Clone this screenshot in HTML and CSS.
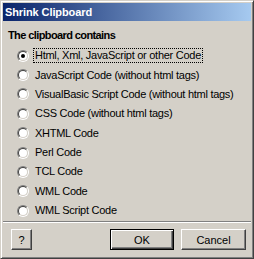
FILE: index.html
```html
<!DOCTYPE html>
<html lang="en">
<head>
    <meta charset="UTF-8">
    <title>Shrink Clipboard</title>
    <link rel="stylesheet" href="styles.css">
</head>
<body>
    <div class="dialog">
        <div class="title-bar">Shrink Clipboard</div>
        <div class="content">
            <h1>The clipboard contains</h1>
            <ul class="options">
                <li><span class="radio checked"></span><span class="label focused">Html, Xml, JavaScript or other Code</span></li>
                <li><span class="radio"></span><span class="label">JavaScript Code (without html tags)</span></li>
                <li><span class="radio"></span><span class="label">VisualBasic Script Code (without html tags)</span></li>
                <li><span class="radio"></span><span class="label">CSS Code (without html tags)</span></li>
                <li><span class="radio"></span><span class="label">XHTML Code</span></li>
                <li><span class="radio"></span><span class="label">Perl Code</span></li>
                <li><span class="radio"></span><span class="label">TCL Code</span></li>
                <li><span class="radio"></span><span class="label">WML Code</span></li>
                <li><span class="radio"></span><span class="label">WML Script Code</span></li>
            </ul>
        </div>
        <div class="separator"></div>
        <div class="buttons">
            <button class="btn btn-help">?</button>
            <div class="spacer"></div>
            <button class="btn btn-default">OK</button>
            <button class="btn">Cancel</button>
        </div>
    </div>
</body>
</html>
```

FILE: styles.css
```css
body {
    margin: 0;
    font-family: 'Liberation Sans', Arial, sans-serif;
    font-size: 11px;
    color: #000;
    background-color: #d4d0c8;
}
.dialog {
    width: 254px;
    height: 259px;
    box-sizing: border-box;
    padding: 2px;
    background-color: #d4d0c8;
    border: 1px solid;
    border-color: #d4d0c8 #404040 #404040 #d4d0c8;
    box-shadow: inset 1px 1px #ffffff, inset -1px -1px #808080;
    display: flex;
    flex-direction: column;
}
.title-bar {
    height: 18px;
    line-height: 18px;
    padding-left: 2px;
    color: #ffffff;
    font-weight: bold;
    letter-spacing: -0.1px;
    background: linear-gradient(to right, #0a246a, #a6caf0);
}
.content {
    padding: 0 5px;
}
h1 {
    margin: 8px 0 0 0;
    font-size: 11px;
    line-height: 13px;
    font-weight: bold;
    letter-spacing: -0.6px;
}
.options {
    list-style: none;
    margin: 4px 0 0 0;
    padding: 0 0 0 9px;
}
.options li {
    display: flex;
    align-items: center;
    height: 19.375px;
    white-space: nowrap;
}
.radio {
    position: relative;
    width: 12px;
    height: 12px;
    box-sizing: border-box;
    border-radius: 50%;
    border: 1px solid;
    border-color: #808080 #ffffff #ffffff #808080;
    flex-shrink: 0;
}
.radio::before {
    content: "";
    position: absolute;
    inset: 0;
    border-radius: 50%;
    border: 1px solid;
    border-color: #404040 #d4d0c8 #d4d0c8 #404040;
    background-color: #ffffff;
}
.radio.checked::after {
    content: "";
    position: absolute;
    left: 3px;
    top: 3px;
    width: 4px;
    height: 4px;
    border-radius: 50%;
    background-color: #000;
}
.label {
    margin-left: 4px;
    padding: 0 1px;
    line-height: 13px;
    letter-spacing: -0.27px;
    border: 1px dotted transparent;
}
.label.focused {
    border-color: #000;
}
.separator {
    margin-top: auto;
    height: 1px;
    border-top: 1px solid #808080;
    background-color: #ffffff;
    margin-bottom: 6px;
}
.buttons {
    display: flex;
    padding: 0 5px 6px 8px;
    gap: 7px;
}
.spacer {
    flex: 1;
}
.btn {
    height: 21px;
    width: 65px;
    padding: 0;
    font-family: 'Liberation Sans', Arial, sans-serif;
    font-size: 11px;
    color: #000;
    background-color: #d4d0c8;
    border: 1px solid;
    border-color: #ffffff #404040 #404040 #ffffff;
    box-shadow: inset -1px -1px #808080;
}
.btn-help {
    width: 21px;
}
.btn-default {
    width: 64px;
    border-color: #000;
    box-shadow: inset 1px 1px #ffffff, inset -1px -1px #404040, inset -2px -2px #808080;
}
```
